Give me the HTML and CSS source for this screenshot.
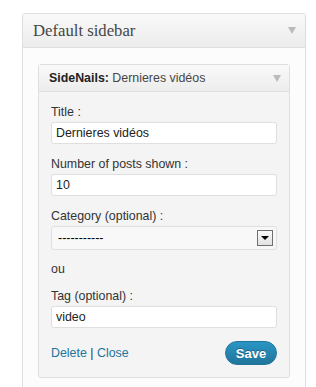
FILE: index.html
```html
<!DOCTYPE html>
<html lang="fr">
<head>
    <meta charset="UTF-8">
    <meta name="viewport" content="width=device-width, initial-scale=1.0">
    <title>Widgets</title>
    <link rel="stylesheet" href="styles.css">
</head>
<body>
    <div class="sidebar">
        <div class="sidebar-head">
            <h3>Default sidebar</h3>
            <span class="toggle"></span>
        </div>
        <div class="sidebar-body">
            <div class="widget">
                <div class="widget-head">
                    <h4><strong>SideNails:</strong> Dernieres vidéos</h4>
                    <span class="toggle"></span>
                </div>
                <div class="widget-body">
                    <div class="field">
                        <label>Title :</label>
                        <input type="text" value="Dernieres vidéos">
                    </div>
                    <div class="field">
                        <label>Number of posts shown :</label>
                        <input type="text" value="10">
                    </div>
                    <div class="field">
                        <label>Category (optional) :</label>
                        <div class="select">
                            <span>-----------</span>
                            <span class="select-btn"></span>
                        </div>
                    </div>
                    <p class="or">ou</p>
                    <div class="field">
                        <label>Tag (optional) :</label>
                        <input type="text" value="video">
                    </div>
                    <div class="widget-actions">
                        <div class="links">
                            <a href="#">Delete</a> | <a href="#">Close</a>
                        </div>
                        <button class="save">Save</button>
                    </div>
                </div>
            </div>
        </div>
    </div>
</body>
</html>
```

FILE: styles.css
```css
* {
    margin: 0;
    padding: 0;
    box-sizing: border-box;
}
body {
    background: #fff;
    font-family: "Liberation Sans", Arial, sans-serif;
    font-size: 12.4px;
    color: #333;
}
.sidebar {
    margin: 13px 10px 0 22px;
    width: 284px;
    min-height: 374px;
    border: 1px solid #dfdfdf;
    border-bottom: none;
    border-radius: 3px 3px 0 0;
    background: #fcfcfc;
}
.sidebar-head {
    display: flex;
    align-items: center;
    justify-content: space-between;
    height: 34px;
    padding: 0 9px 0 10px;
    border-bottom: 1px solid #dfdfdf;
    background: linear-gradient(#f9f9f9, #ececec);
}
.sidebar-head h3 {
    font-family: "Liberation Serif", Georgia, serif;
    font-weight: normal;
    font-size: 16.7px;
    color: #464646;
}
.toggle {
    width: 0;
    height: 0;
    border-left: 4px solid transparent;
    border-right: 4px solid transparent;
    border-top: 7px solid #bbb;
}
.sidebar-body {
    padding: 16px 15px 10px 15px;
}
.widget {
    border: 1px solid #dfdfdf;
    border-radius: 3px;
    background: #f4f4f4;
}
.widget-head {
    display: flex;
    align-items: center;
    justify-content: space-between;
    height: 27px;
    padding: 0 8px 0 10px;
    border-bottom: 1px solid #dfdfdf;
    background: linear-gradient(#f9f9f9, #ececec);
}
.widget-head h4 {
    font-size: 12.4px;
    font-weight: normal;
    color: #464646;
}
.widget-head strong {
    color: #222;
}
.widget-body {
    padding: 12px 12px 12px 12px;
}
.field {
    margin-bottom: 12px;
}
.field label {
    display: block;
    line-height: 16px;
    margin-bottom: 2px;
}
.field input {
    display: block;
    width: 100%;
    height: 22px;
    padding: 0 4px;
    border: 1px solid #dfdfdf;
    border-radius: 3px;
    background: #fff;
    font-family: "Liberation Sans", Arial, sans-serif;
    font-size: 12.4px;
    color: #222;
}
.select {
    display: flex;
    align-items: center;
    justify-content: space-between;
    height: 24px;
    padding: 0 3px 0 6px;
    border: 1px solid #dfdfdf;
    border-radius: 3px;
    background: #f8f8f8;
    color: #000;
}
.select-btn {
    display: flex;
    align-items: center;
    justify-content: center;
    width: 16px;
    height: 16px;
    border: 1px solid #6f6f6f;
    background: linear-gradient(#fafafa, #e2e2e2);
}
.select-btn::after {
    content: "";
    border-left: 4px solid transparent;
    border-right: 4px solid transparent;
    border-top: 4px solid #000;
}
.or {
    line-height: 16px;
    margin: -1px 0 11px;
}
.widget-actions {
    display: flex;
    align-items: center;
    justify-content: space-between;
    margin-top: 13px;
}
.links {
    line-height: 16px;
}
.links a {
    color: #21759b;
    text-decoration: none;
}
.save {
    width: 52px;
    height: 24px;
    border: 1px solid #21759b;
    border-radius: 12px;
    background: linear-gradient(#2a95c5, #21759b);
    color: #fff;
    font-family: "Liberation Sans", Arial, sans-serif;
    font-size: 13px;
    font-weight: bold;
    text-shadow: 0 -1px 0 rgba(0, 0, 0, 0.3);
}
```
